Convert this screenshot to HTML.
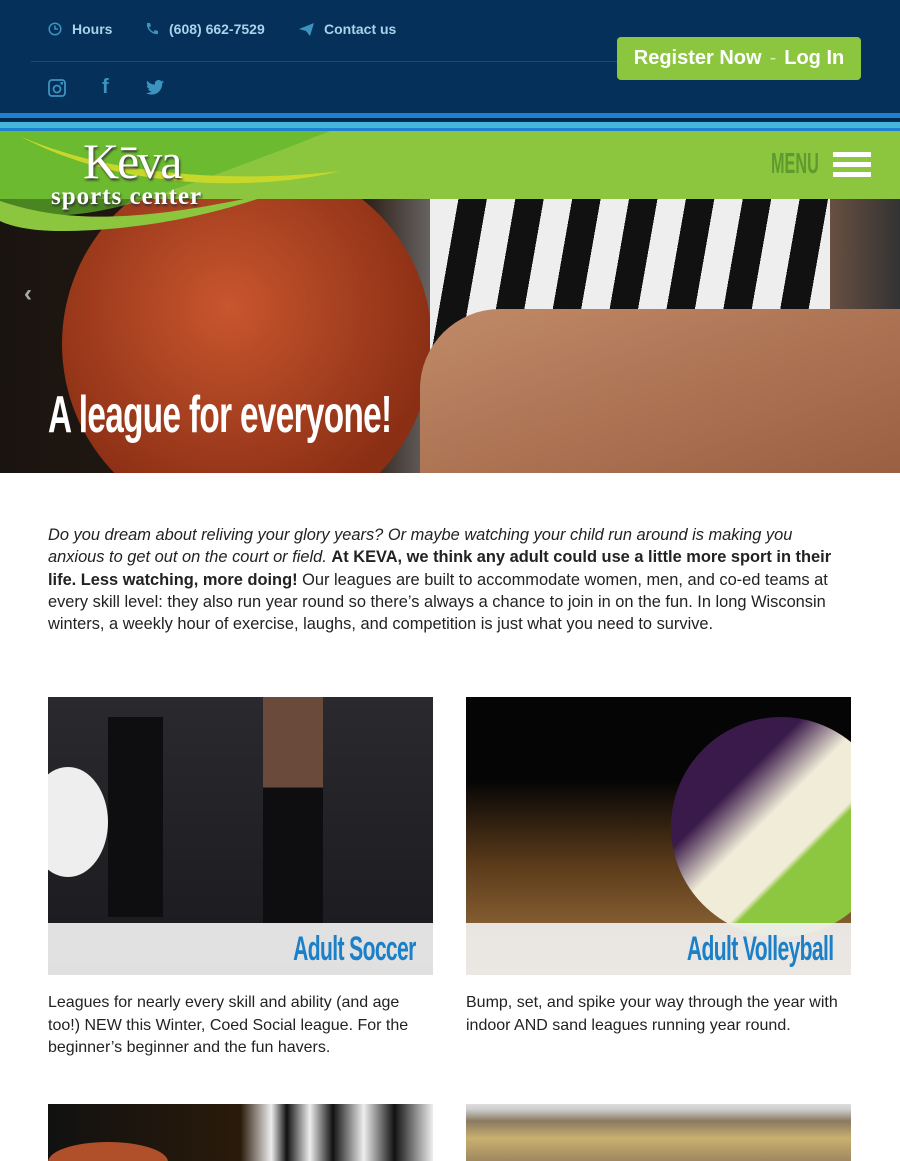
<!DOCTYPE html>
<html><head><meta charset="utf-8"><style>
*{margin:0;padding:0;box-sizing:border-box}
html,body{width:900px;height:1161px;overflow:hidden}
body{background:#fff;font-family:"Liberation Sans",sans-serif;color:#222;position:relative}
.top{position:absolute;left:0;top:0;width:900px;height:113px;background:#04305a}
.top .t{position:absolute;top:21px;color:#a9d3ea;font-size:14px;font-weight:bold}
.top .ic{position:absolute;color:#3c93c0}
.hr{position:absolute;left:31px;top:61px;width:590px;height:1px;background:#1f4a73}
.btn{position:absolute;left:617px;top:37px;width:244px;height:43px;background:#8cc63f;border-radius:4px;color:#fff;font-weight:bold;font-size:20px;line-height:43px;text-align:center}
.btn span{color:#d5ecb5;font-weight:normal;margin:0 8px}
.s1{position:absolute;left:0;top:113px;width:900px;height:5px;background:#1e80d0}
.s2{position:absolute;left:0;top:118px;width:900px;height:4px;background:#06284a}
.s3{position:absolute;left:0;top:122px;width:900px;height:6px;background:#45b5dc}
.s4{position:absolute;left:0;top:128px;width:900px;height:3px;background:#1e80d0}
.green{position:absolute;left:0;top:131px;width:900px;height:68px;background:#8cc63f}
.hero{position:absolute;left:0;top:199px;width:900px;height:274px;overflow:hidden;background:linear-gradient(90deg,#1a1410 0%,#2a1a12 40%,#777 50%,#222 60%,#c58a6a 70%,#9a6a50 85%,#333 100%)}
.p{position:absolute;left:48px;top:524px;width:792px;font-size:16.4px;line-height:22.3px;color:#222}
.card{position:absolute;width:385px;height:278px;overflow:hidden}
.lab{position:absolute;left:0;top:226px;width:385px;height:52px;background:rgba(240,240,240,.93);text-align:right;padding-right:17px;font-weight:bold;font-size:34px;color:#1b80c8;line-height:52px;letter-spacing:-1px}
.lab b{display:inline-block;transform:scaleX(.62);transform-origin:right}
.ct{position:absolute;font-size:16px;line-height:22.5px;color:#222}
</style></head><body>
<div class="top">
<svg class="ic" style="left:48px;top:22px" width="14" height="14" viewBox="0 0 14 14"><circle cx="7" cy="7" r="5.8" fill="none" stroke="#3c93c0" stroke-width="1.5"/><path d="M7 3.5V7h3" fill="none" stroke="#3c93c0" stroke-width="1.5"/></svg>
<div class="t" style="left:72px">Hours</div>
<svg class="ic" style="left:145px;top:22px" width="14" height="14" viewBox="0 0 14 14"><path d="M2 1l3 0 1 3-2 1.5c1 2 2.5 3.5 4.5 4.5L10 8l3 1v3c-6 1-12-5-11-11z" fill="#3c93c0"/></svg>
<div class="t" style="left:169px">(608) 662-7529</div>
<svg class="ic" style="left:299px;top:23px" width="15" height="13" viewBox="0 0 15 13"><path d="M0 6L15 0 11 13 7 8z" fill="#3c93c0"/></svg>
<div class="t" style="left:324px">Contact us</div>
<div class="hr"></div>
<svg class="ic" style="left:48px;top:79px" width="18" height="18" viewBox="0 0 18 18"><rect x="1" y="1" width="16" height="16" rx="3" fill="none" stroke="#3c93c0" stroke-width="1.8"/><circle cx="9" cy="10" r="3.5" fill="none" stroke="#3c93c0" stroke-width="1.8"/><rect x="12.5" y="3" width="2.5" height="2.5" fill="#3c93c0"/></svg>
<div class="ic" style="left:102px;top:76px;font-size:20px;font-weight:bold;color:#3c93c0">f</div>
<svg class="ic" style="left:146px;top:80px" width="18" height="15" viewBox="0 0 24 20"><path d="M24 2.4c-.9.4-1.8.7-2.8.8 1-.6 1.8-1.6 2.2-2.7-1 .6-2 1-3.1 1.2A4.9 4.9 0 0 0 11.9 6.2 14 14 0 0 1 1.7 1 4.9 4.9 0 0 0 3.2 7.6c-.8 0-1.6-.2-2.2-.6 0 2.4 1.7 4.4 3.9 4.8-.7.2-1.5.2-2.2.1.6 2 2.4 3.4 4.6 3.4A9.9 9.9 0 0 1 0 17.3 14 14 0 0 0 7.5 19.5c9 0 14-7.5 14-14v-.6c1-.7 1.8-1.6 2.5-2.5z" fill="#3c93c0"/></svg>
<div class="btn">Register Now<span>-</span>Log In</div>
</div>
<div class="s1"></div><div class="s2"></div><div class="s3"></div><div class="s4"></div>
<div class="green"></div>
<div class="hero">
<div style="position:absolute;left:62px;top:-40px;width:370px;height:370px;border-radius:50%;background:radial-gradient(circle at 45% 40%,#c8562e,#8a2e14 70%)"></div>
<div style="position:absolute;left:430px;top:0;width:400px;height:200px;background:repeating-linear-gradient(100deg,#eee 0 28px,#111 28px 56px)"></div>
<div style="position:absolute;left:420px;top:110px;width:480px;height:170px;background:linear-gradient(160deg,#c08a68,#9a5e40);border-radius:80px 0 0 0"></div>
<div style="position:absolute;left:48px;top:186px;color:#fff;font-weight:bold;font-size:52px;transform:scaleX(.64);transform-origin:left;letter-spacing:-1px;white-space:nowrap">A league for everyone!</div>
</div>
<svg style="position:absolute;left:0;top:131px" width="420" height="100" viewBox="0 0 420 100"><path d="M0 0H330C280 20 200 50 140 70 90 85 40 90 0 78z" fill="#5db52a" opacity=".7"/><path d="M20 5C120 50 260 50 340 40 260 60 120 60 20 5z" fill="#c8d82a"/><path d="M0 70C60 90 130 95 280 60 200 90 120 100 60 100 30 100 10 95 0 90z" fill="#8cc63f"/></svg>
<div style="position:absolute;left:83px;top:132px;font-family:'Liberation Serif',serif;font-size:50px;color:#fff;text-shadow:1px 2px 2px #333;letter-spacing:-2px">Kēva</div>
<div style="position:absolute;left:51px;top:184px;font-family:'Liberation Serif',serif;font-size:25px;font-weight:bold;color:#fff;text-shadow:1px 2px 2px #333;letter-spacing:1px;line-height:25px">sports center</div>
<div style="position:absolute;left:771px;top:148px;font-size:29px;font-weight:bold;color:#5f9a2e;transform:scaleX(.56);transform-origin:left">MENU</div>
<div style="position:absolute;left:833px;top:152px;width:38px;height:5px;background:#fff;box-shadow:0 10px 0 #fff,0 20px 0 #fff"></div>
<div style="position:absolute;left:24px;top:280px;color:#aaa;font-size:24px;font-weight:bold">&#8249;</div>
<div class="p"><i>Do you dream about reliving your glory years? Or maybe watching your child run around is making you anxious to get out on the court or field.</i> <b>At KEVA, we think any adult could use a little more sport in their life. Less watching, more doing!</b> Our leagues are built to accommodate women, men, and co-ed teams at every skill level: they also run year round so there’s always a chance to join in on the fun. In long Wisconsin winters, a weekly hour of exercise, laughs, and competition is just what you need to survive.</div>
<div class="card" style="left:48px;top:697px;background:linear-gradient(180deg,#2a2a2e,#1a1a1e)">
<div style="position:absolute;left:-20px;top:70px;width:80px;height:110px;border-radius:50%;background:#eee"></div>
<div style="position:absolute;left:60px;top:20px;width:55px;height:200px;background:#0e0e10"></div>
<div style="position:absolute;left:215px;top:0;width:60px;height:226px;background:linear-gradient(#6a4a3a 40%,#0e0e10 40%)"></div>
<div class="lab"><b>Adult Soccer</b></div></div>
<div class="card" style="left:466px;top:697px;background:linear-gradient(180deg,#050505 30%,#5a3a1a 60%,#a77a45)">
<div style="position:absolute;left:205px;top:20px;width:220px;height:220px;border-radius:50%;background:linear-gradient(135deg,#3a1a4a 30%,#f0ecd8 45%,#f0ecd8 60%,#8dc63f 62%)"></div>
<div class="lab"><b>Adult Volleyball</b></div></div>
<div class="ct" style="left:48px;top:992px;width:385px">Leagues for nearly every skill and ability (and age too!) NEW this Winter, Coed Social league. For the beginner’s beginner and the fun havers.</div>
<div class="ct" style="left:466px;top:992px;width:400px">Bump, set, and spike your way through the year with indoor AND sand leagues running year round.</div>
<div style="position:absolute;left:48px;top:1104px;width:385px;height:57px;overflow:hidden;background:linear-gradient(90deg,#111 0,#2a1a0a 50%,#eee 58%,#111 62%,#eee 68%,#111 74%,#eee 82%,#111 90%,#eee)"><div style="position:absolute;left:0;top:38px;width:120px;height:40px;border-radius:50%;background:#b0502a"></div></div>
<div style="position:absolute;left:466px;top:1104px;width:385px;height:57px;background:linear-gradient(180deg,#ddd 0,#ccc 10%,#8a7a60 30%,#c8b070 60%,#a08860)"></div>
</body></html>
